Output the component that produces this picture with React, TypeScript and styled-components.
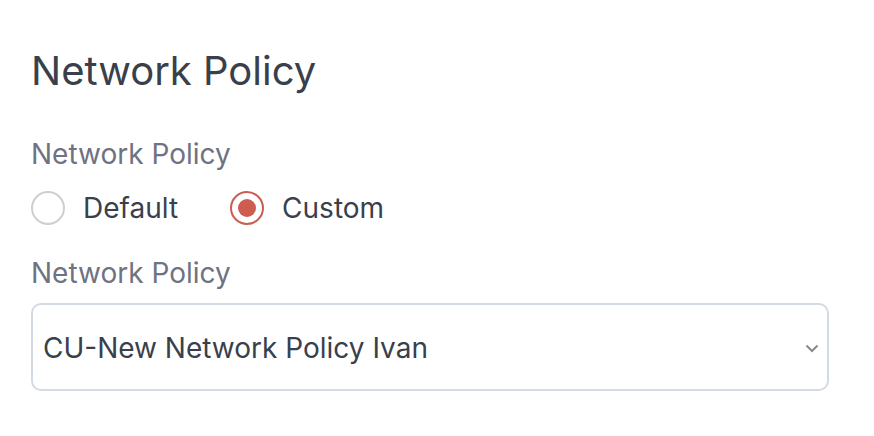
import React from "react";
import styled, { createGlobalStyle } from "styled-components";

const Global = createGlobalStyle`
  html, body { margin: 0; padding: 0; background: #ffffff; }
  body { font-family: Inter, "Noto Sans", sans-serif; }
`;

const Page = styled.div`
  padding: 47px 45px 0 31px;
  display: flex;
  flex-direction: column;
`;

const Title = styled.h1`
  margin: 0;
  font-size: 40px;
  font-weight: 400;
  color: #3a3f4c;
  line-height: 48px;
`;

const Label = styled.div<{ $top: number }>`
  margin-top: ${(p) => p.$top}px;
  font-size: 28px;
  color: #6f7282;
  line-height: 34px;
`;

const RadioRow = styled.div`
  display: flex;
  align-items: center;
  gap: 52px;
  margin-top: 20px;
  height: 34px;
`;

const RadioOption = styled.label`
  display: flex;
  align-items: center;
  gap: 18px;
  font-size: 28px;
  line-height: 34px;
  color: #3a3f4c;
  cursor: pointer;
`;

const Circle = styled.span<{ $checked?: boolean }>`
  box-sizing: border-box;
  width: 34px;
  height: 34px;
  border-radius: 50%;
  border: 2px solid ${(p) => (p.$checked ? "#cc5d50" : "#cfcfcf")};
  display: flex;
  align-items: center;
  justify-content: center;
  &::after {
    content: "";
    display: ${(p) => (p.$checked ? "block" : "none")};
    width: 18px;
    height: 18px;
    border-radius: 50%;
    background: #cc5d50;
  }
`;

const Select = styled.div`
  box-sizing: border-box;
  margin-top: 13px;
  width: 798px;
  height: 88px;
  border: 2px solid #d3dae1;
  border-radius: 10px;
  display: flex;
  align-items: center;
  justify-content: space-between;
  padding: 2px 8px 0 10px;
  font-size: 28px;
  color: #3a3f4c;
`;

const Chevron = () => (
  <svg width="14" height="9" viewBox="0 0 14 9">
    <path d="M1.5 1.5 L7 7 L12.5 1.5" fill="none" stroke="#8a8a8a" strokeWidth="2" />
  </svg>
);

export default function App() {
  return (
    <>
      <Global />
      <Page>
        <Title>Network Policy</Title>
        <Label $top={42}>Network Policy</Label>
        <RadioRow>
          <RadioOption>
            <Circle />
            Default
          </RadioOption>
          <RadioOption>
            <Circle $checked />
            Custom
          </RadioOption>
        </RadioRow>
        <Label $top={31}>Network Policy</Label>
        <Select>
          <span>CU-New Network Policy Ivan</span>
          <Chevron />
        </Select>
      </Page>
    </>
  );
}
